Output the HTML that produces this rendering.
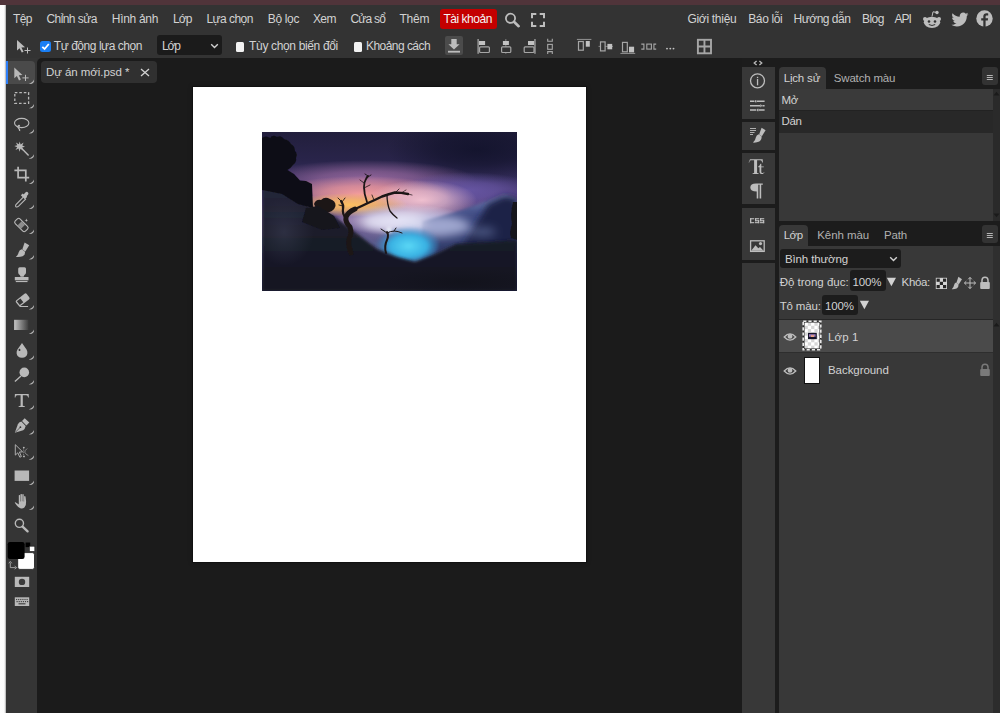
<!DOCTYPE html>
<html><head><meta charset="utf-8"><style>
html,body{margin:0;padding:0;}
body{width:1000px;height:713px;overflow:hidden;position:relative;background:#1b1b1b;font-family:"Liberation Sans",sans-serif;}
body>div,body>span,body>svg{position:absolute;}
span{white-space:nowrap;}
</style></head><body>
<div style="left:0px;top:0px;width:1000px;height:5px;background:rgb(80,52,58);"></div><div style="left:0px;top:5px;width:6px;height:708px;background:linear-gradient(to right,#fefefe 0,#fcfcfc 4.2px,#c8c8c8 5.4px,#9a9a9a 6px);"></div><div style="left:6px;top:5px;width:994px;height:53px;background:#333333;"></div><div style="left:6px;top:58px;width:31px;height:655px;background:#353535;"></div><div style="left:37px;top:57px;width:8px;height:8px;background:#343434;"></div><div style="left:37px;top:58px;width:705px;height:655px;background:#1b1b1b;border-radius:5px 0 0 0;"></div><span style="left:12.90px;top:12.84px;font-size:12px;line-height:12px;color:#d2d2d2;letter-spacing:-0.586px;">Tệp</span><span style="left:46.40px;top:12.84px;font-size:12px;line-height:12px;color:#d2d2d2;letter-spacing:-0.549px;">Chỉnh sửa</span><span style="left:111.80px;top:12.84px;font-size:12px;line-height:12px;color:#d2d2d2;letter-spacing:-0.298px;">Hình ảnh</span><span style="left:173.00px;top:12.84px;font-size:12px;line-height:12px;color:#d2d2d2;letter-spacing:-0.909px;">Lớp</span><span style="left:206.40px;top:12.84px;font-size:12px;line-height:12px;color:#d2d2d2;letter-spacing:-0.531px;">Lựa chọn</span><span style="left:267.80px;top:12.84px;font-size:12px;line-height:12px;color:#d2d2d2;letter-spacing:-0.349px;">Bộ lọc</span><span style="left:313.00px;top:12.84px;font-size:12px;line-height:12px;color:#d2d2d2;letter-spacing:-0.636px;">Xem</span><span style="left:350.40px;top:12.84px;font-size:12px;line-height:12px;color:#d2d2d2;letter-spacing:-0.755px;">Cửa sổ</span><span style="left:399.40px;top:12.84px;font-size:12px;line-height:12px;color:#d2d2d2;letter-spacing:-0.224px;">Thêm</span><div style="left:440px;top:9px;width:56.5px;height:19.5px;background:#c40000;border-radius:3px;"></div><span style="left:443.40px;top:12.84px;font-size:12px;line-height:12px;color:#f4f4f4;letter-spacing:-0.461px;">Tài khoản</span><svg style="left:504px;top:12px;" width="18" height="16" viewBox="0 0 18 16"><circle cx="6.5" cy="6.3" r="4.6" fill="none" stroke="#bdbdbd" stroke-width="1.8"/><line x1="10" y1="9.8" x2="14.6" y2="14.2" stroke="#bdbdbd" stroke-width="2.6" stroke-linecap="round"/></svg><svg style="left:530px;top:11.5px;" width="16" height="16" viewBox="0 0 16 16"><path d="M2 6.3V2H6.3M9.7 2H14V6.3M14 9.7V14H9.7M6.3 14H2V9.7" fill="none" stroke="#bdbdbd" stroke-width="2"/></svg><span style="left:687.40px;top:12.84px;font-size:12px;line-height:12px;color:#d2d2d2;letter-spacing:-0.288px;">Giới thiệu</span><span style="left:748.20px;top:12.84px;font-size:12px;line-height:12px;color:#d2d2d2;letter-spacing:-0.348px;">Báo lỗi</span><span style="left:793.60px;top:12.84px;font-size:12px;line-height:12px;color:#d2d2d2;letter-spacing:-0.496px;">Hướng dẫn</span><span style="left:861.90px;top:12.84px;font-size:12px;line-height:12px;color:#d2d2d2;letter-spacing:-0.505px;">Blog</span><span style="left:894.40px;top:12.84px;font-size:12px;line-height:12px;color:#d2d2d2;letter-spacing:-0.964px;">API</span><svg style="left:922px;top:10px;" width="20" height="19" viewBox="0 0 20 19"><ellipse cx="10" cy="12.3" rx="8.2" ry="5.6" fill="#bdbdbd"/><circle cx="3" cy="9" r="2" fill="#bdbdbd"/><circle cx="17" cy="9" r="2" fill="#bdbdbd"/><circle cx="15" cy="2.5" r="1.7" fill="#bdbdbd"/><path d="M10 6.5L11 1.8L15 2.5" fill="none" stroke="#bdbdbd" stroke-width="1"/><circle cx="7" cy="11.5" r="1.3" fill="#333333"/><circle cx="13" cy="11.5" r="1.3" fill="#333333"/><path d="M6.8 14.5Q10 16.5 13.2 14.5" fill="none" stroke="#333333" stroke-width="1"/></svg><svg style="left:951px;top:12px;" width="18" height="15" viewBox="0 0 18 15"><path d="M17.5 2.1c-.6.3-1.3.5-2 .6.7-.4 1.3-1.1 1.5-1.9-.7.4-1.4.7-2.2.9C14.1.9 13.2.5 12.2.5c-1.9 0-3.5 1.6-3.5 3.5 0 .3 0 .5.1.8C5.9 4.7 3.3 3.3 1.6 1.2c-.3.5-.5 1.1-.5 1.8 0 1.2.6 2.3 1.6 2.9-.6 0-1.1-.2-1.6-.4 0 1.7 1.2 3.1 2.8 3.4-.3.1-.6.1-.9.1-.2 0-.4 0-.7-.1.4 1.4 1.7 2.4 3.3 2.4-1.2.9-2.7 1.5-4.4 1.5H.5c1.6 1 3.4 1.6 5.4 1.6 6.4 0 9.9-5.3 9.9-9.9v-.5c.7-.5 1.3-1.1 1.7-1.9z" fill="#bdbdbd"/></svg><svg style="left:976px;top:10px;" width="17" height="17" viewBox="0 0 17 17"><circle cx="8.5" cy="8.5" r="8.2" fill="#bdbdbd"/><path d="M9.6 17V10.6H11.8L12.1 8.2H9.6V6.7C9.6 6 9.8 5.5 10.8 5.5H12.2V3.4C11.9 3.4 11.2 3.3 10.4 3.3 8.7 3.3 7.3 4.4 7.3 6.3V8.2H5.2V10.6H7.3V17Z" fill="#333333"/></svg><svg style="left:16px;top:39px;" width="16" height="15" viewBox="0 0 16 15"><path d="M1 1L1 11.5L3.6 9.2L5.8 13.6L7.6 12.7L5.4 8.4L9 8.2Z" fill="#bdbdbd"/><path d="M11.5 8.5V14.5M8.5 11.5H14.5" stroke="#bdbdbd" stroke-width="1"/></svg><div style="left:40.2px;top:41.1px;width:10.4px;height:10.8px;background:#1a7ff5;border-radius:2.5px;"></div><svg style="left:40px;top:41px;" width="11" height="11" viewBox="0 0 11 11"><path d="M2.3 5.8L4.6 8L8.8 3" fill="none" stroke="#fff" stroke-width="1.8"/></svg><span style="left:53.80px;top:39.84px;font-size:12px;line-height:12px;color:#d2d2d2;letter-spacing:-0.455px;">Tự động lựa chọn</span><div style="left:157px;top:35px;width:65px;height:20px;background:#1b1b1b;border-radius:3px;"></div><span style="left:161.90px;top:40.04px;font-size:12px;line-height:12px;color:#d2d2d2;letter-spacing:-1.109px;">Lớp</span><svg style="left:209.5px;top:42.5px;" width="9" height="6" viewBox="0 0 9 6"><path d="M1.2 1.2L4.5 4.4L7.8 1.2" fill="none" stroke="#d2d2d2" stroke-width="1.4"/></svg><div style="left:235.8px;top:42px;width:8.4px;height:9.6px;background:#f2f2f2;border-radius:1.5px;"></div><span style="left:249.10px;top:39.84px;font-size:12px;line-height:12px;color:#d2d2d2;letter-spacing:-0.350px;">Tùy chọn biến đổi</span><div style="left:354px;top:42px;width:8.4px;height:9.6px;background:#f2f2f2;border-radius:1.5px;"></div><span style="left:366.00px;top:39.84px;font-size:12px;line-height:12px;color:#d2d2d2;letter-spacing:-0.543px;">Khoảng cách</span><div style="left:445px;top:35.6px;width:18px;height:19.2px;background:#4b4b4b;border-radius:2px;"></div><svg style="left:445px;top:35.6px;" width="18" height="19" viewBox="0 0 18 19"><path d="M6.3 3H11.7V8.3H14.6L9 13.6L3.4 8.3H6.3Z" fill="#bdbdbd"/><rect x="3" y="14.8" width="12" height="1.8" fill="#bdbdbd"/></svg><svg style="left:0;top:0" width="1000" height="60" viewBox="0 0 1000 60"><rect x="477.3" y="39" width="1.7" height="14.8" fill="#8a8a8a"/><rect x="479" y="41" width="6.1" height="4" fill="#c2c2c2"/><rect x="479.6" y="46.8" width="9.8" height="5.7" rx="1" fill="none" stroke="#a6a6a6" stroke-width="1.2"/><rect x="505.4" y="39" width="0.9" height="14.8" fill="#8a8a8a"/><rect x="502.9" y="41" width="6" height="4" fill="#c2c2c2"/><rect x="501.6" y="46.8" width="9.2" height="5.7" rx="1" fill="#333333" stroke="#a6a6a6" stroke-width="1.2"/><rect x="534.1" y="39" width="1.7" height="14.8" fill="#8a8a8a"/><rect x="528" y="41" width="6.1" height="4" fill="#c2c2c2"/><rect x="524.2" y="46.8" width="9.8" height="5.7" rx="1" fill="none" stroke="#a6a6a6" stroke-width="1.2"/><path d="M547.7 38.8V41.3H552.3V38.8M547.7 54V51.6H552.3V54" fill="none" stroke="#a6a6a6" stroke-width="1.1"/><rect x="547.7" y="44.4" width="4.6" height="4.9" fill="none" stroke="#a6a6a6" stroke-width="1.1"/><rect x="576.9" y="38.9" width="14.5" height="1.1" fill="#8a8a8a"/><rect x="578.5" y="41.5" width="4.8" height="8.7" fill="none" stroke="#a6a6a6" stroke-width="1.2"/><rect x="585.8" y="41" width="4" height="5.7" fill="#c2c2c2"/><rect x="598.5" y="45.9" width="14.5" height="0.9" fill="#8a8a8a"/><rect x="600.5" y="41.9" width="4.6" height="9" fill="#333333" stroke="#a6a6a6" stroke-width="1.2"/><rect x="607.4" y="43.9" width="4.8" height="5.4" fill="#c2c2c2"/><rect x="620.4" y="52.9" width="14.8" height="1.1" fill="#8a8a8a"/><rect x="622.5" y="42.4" width="4.8" height="9.4" fill="none" stroke="#a6a6a6" stroke-width="1.2"/><rect x="629" y="46.7" width="5.1" height="5.7" fill="#c2c2c2"/><path d="M641.3 44.1H643.9V49.1H641.3M656.2 44.1H653.9V49.1H656.2" fill="none" stroke="#a6a6a6" stroke-width="1.1"/><rect x="646.8" y="44.1" width="4.6" height="5" fill="none" stroke="#a6a6a6" stroke-width="1.1"/><circle cx="667" cy="48.6" r="0.95" fill="#c2c2c2"/><circle cx="670.3" cy="48.6" r="0.95" fill="#c2c2c2"/><circle cx="673.5" cy="48.6" r="0.95" fill="#c2c2c2"/><rect x="697.9" y="39.8" width="13.1" height="13.5" fill="none" stroke="#a6a6a6" stroke-width="1.9"/><path d="M704.45 39.8V53.3M697.9 46.55H711" stroke="#a6a6a6" stroke-width="1.9"/></svg><div style="left:40.8px;top:61.3px;width:116px;height:21.6px;background:#303030;border-radius:4px;"></div><span style="left:46.00px;top:67.27px;font-size:11.5px;line-height:11.5px;color:#d2d2d2;letter-spacing:-0.060px;">Dự án mới.psd *</span><svg style="left:140px;top:68px;" width="10" height="9" viewBox="0 0 10 9"><path d="M1 1L9 8M9 1L1 8" stroke="#d2d2d2" stroke-width="1.3"/></svg><div style="left:192.9px;top:86.9px;width:393.4px;height:474.8px;background:#ffffff;box-shadow:0 0 0 1px #111111,0 0 4px 1px rgba(0,0,0,0.25);"></div><svg style="left:262px;top:132px" width="255" height="159" viewBox="0 0 255 159" preserveAspectRatio="none">
<defs>
<filter id="b4" x="-50%" y="-50%" width="200%" height="200%"><feGaussianBlur stdDeviation="5"/></filter>
<filter id="b3" x="-50%" y="-50%" width="200%" height="200%"><feGaussianBlur stdDeviation="3"/></filter>
<filter id="b2" x="-50%" y="-50%" width="200%" height="200%"><feGaussianBlur stdDeviation="1.8"/></filter>
<filter id="b1" x="-50%" y="-50%" width="200%" height="200%"><feGaussianBlur stdDeviation="0.7"/></filter>
<filter id="b05" x="-50%" y="-50%" width="200%" height="200%"><feGaussianBlur stdDeviation="0.35"/></filter>
<clipPath id="cl"><rect width="255" height="159"/></clipPath>
<linearGradient id="sky" x1="0" y1="0" x2="0" y2="1">
<stop offset="0" stop-color="#221f3c"/><stop offset="0.18" stop-color="#29244a"/><stop offset="0.3" stop-color="#362e5e"/><stop offset="0.4" stop-color="#4e3e7c"/><stop offset="0.55" stop-color="#7a6096"/><stop offset="0.7" stop-color="#5a5a8a"/><stop offset="1" stop-color="#25283e"/>
</linearGradient>
<linearGradient id="gnd" x1="0" y1="0" x2="0" y2="1">
<stop offset="0" stop-color="#25273a"/><stop offset="0.5" stop-color="#191a27"/><stop offset="1" stop-color="#161722"/>
</linearGradient>
<linearGradient id="mtn" x1="0" y1="0" x2="0" y2="1">
<stop offset="0" stop-color="#7480b4"/><stop offset="0.2" stop-color="#404c84"/><stop offset="1" stop-color="#1e2448"/>
</linearGradient>
<radialGradient id="lk" cx="0.55" cy="0.55" r="0.5"><stop offset="0" stop-color="#5ad8f6"/><stop offset="0.55" stop-color="#38b0e2"/><stop offset="1" stop-color="#3a80c4" stop-opacity="0"/></radialGradient>
<radialGradient id="g1"><stop offset="0" stop-color="#11122a" stop-opacity="0.85"/><stop offset="0.45" stop-color="#11122a" stop-opacity="0.595"/><stop offset="1" stop-color="#11122a" stop-opacity="0"/></radialGradient><radialGradient id="g2"><stop offset="0" stop-color="#a470a6" stop-opacity="0.85"/><stop offset="0.45" stop-color="#a470a6" stop-opacity="0.595"/><stop offset="1" stop-color="#a470a6" stop-opacity="0"/></radialGradient><radialGradient id="g3"><stop offset="0" stop-color="#6c5aaa" stop-opacity="0.85"/><stop offset="0.45" stop-color="#6c5aaa" stop-opacity="0.595"/><stop offset="1" stop-color="#6c5aaa" stop-opacity="0"/></radialGradient><radialGradient id="g4"><stop offset="0" stop-color="#f49c9c" stop-opacity="1.0"/><stop offset="0.45" stop-color="#f49c9c" stop-opacity="0.700"/><stop offset="1" stop-color="#f49c9c" stop-opacity="0"/></radialGradient><radialGradient id="g5"><stop offset="0" stop-color="#f4c4d2" stop-opacity="0.95"/><stop offset="0.45" stop-color="#f4c4d2" stop-opacity="0.665"/><stop offset="1" stop-color="#f4c4d2" stop-opacity="0"/></radialGradient><radialGradient id="g6"><stop offset="0" stop-color="#ffc060" stop-opacity="1.0"/><stop offset="0.45" stop-color="#ffc060" stop-opacity="0.700"/><stop offset="1" stop-color="#ffc060" stop-opacity="0"/></radialGradient><radialGradient id="g7"><stop offset="0" stop-color="#e6e0f4" stop-opacity="0.95"/><stop offset="0.45" stop-color="#e6e0f4" stop-opacity="0.665"/><stop offset="1" stop-color="#e6e0f4" stop-opacity="0"/></radialGradient><radialGradient id="hill"><stop offset="0" stop-color="#34374c" stop-opacity="0.7"/><stop offset="1" stop-color="#34374c" stop-opacity="0"/></radialGradient><radialGradient id="vig"><stop offset="0" stop-color="#101118" stop-opacity="0.6"/><stop offset="1" stop-color="#101118" stop-opacity="0"/></radialGradient>
</defs>
<g clip-path="url(#cl)">
<rect width="255" height="159" fill="url(#sky)"/>
<ellipse cx="215" cy="18" rx="90" ry="34" fill="url(#g1)"/><ellipse cx="105" cy="48" rx="110" ry="20" fill="url(#g2)"/><ellipse cx="205" cy="58" rx="70" ry="18" fill="url(#g3)"/><ellipse cx="100" cy="62" rx="90" ry="18" fill="url(#g4)"/><ellipse cx="160" cy="68" rx="55" ry="20" fill="url(#g5)"/><ellipse cx="88" cy="73" rx="58" ry="12" fill="url(#g6)"/><ellipse cx="140" cy="88" rx="65" ry="16" fill="url(#g7)"/>
<path d="M160 90L200 78L242 63L250 65L255 68V159H160Z" fill="url(#mtn)" filter="url(#b2)"/>
<path d="M200 116L214 92L226 72L242 64L255 66V159H200Z" fill="#1e2446" filter="url(#b3)"/>
<g filter="url(#b4)">
<ellipse cx="172" cy="94" rx="36" ry="11" fill="#b8bee4" opacity="0.8"/><ellipse cx="220" cy="100" rx="14" ry="5" fill="#6a78a8" opacity="0.6"/>
<ellipse cx="132" cy="90" rx="32" ry="8" fill="#e4e4f6" opacity="0.85"/>
</g>
<ellipse cx="143" cy="112" rx="34" ry="20" fill="url(#lk)" filter="url(#b2)"/>
<circle cx="127" cy="98" r="3" fill="#f4f8ff" opacity="0.8" filter="url(#b2)"/>
<path d="M0 56L30 60L51 76L72 84L102 107L115 117L135 125L153 130L173 122.5L194 112L230 110L255 108V159H0Z" fill="url(#gnd)" filter="url(#b2)"/>
<ellipse cx="22" cy="100" rx="30" ry="34" fill="url(#hill)"/>
<ellipse cx="200" cy="150" rx="80" ry="14" fill="url(#vig)"/>
<g filter="url(#b1)">
<path d="M0 6Q4 3 8 6Q11 2 15 5Q19 3 22 7Q27 8 29 12Q33 14 33 19Q36 22 34 26Q35 30 31 33Q29 36 25.5 38L32 42L38 48.5L44 49L50 52L51 76L36 72L20 62L0 58Z" fill="#0e0e16"/>
<path d="M52 72Q54 67 59 68Q63 64 68 67Q74 69 73.5 74Q72 80 63 81Q55 81 52 72Z" fill="#1c1418"/>
<path d="M44 76L56 74L72 84L78 96L60 98L40 90Z" fill="#14141e"/>
</g>
<g filter="url(#b05)" fill="none" stroke="#1c1517" stroke-linecap="round" stroke-linejoin="round">
<path d="M89 121Q86 114 87 107Q90 101 88 95Q83 90 84 85Q86 80 93 77" stroke-width="5"/>
<path d="M84 86Q80 82 81 77Q82 73 79 69" stroke-width="2.2"/>
<path d="M93 77Q100 74 106 71Q113 68 120 64.5Q127 62 133 60.5Q139 60.5 146 62" stroke-width="2.4"/>
<path d="M105 70Q102 62 102 55Q102 50 104 47Q105 45 106 44" stroke-width="1.8"/>
<path d="M106 44L103 42M106 45L109 43" stroke-width="0.9"/>
<path d="M125 63Q125 72 128 79Q131 83 135 86" stroke-width="1.3"/>
<path d="M79 69L76 66M80 70L83 66M81 74L77 73" stroke-width="0.9"/>
<path d="M102 56L108 53M102 51L98 48M112 68L110 63M133 61L137 57" stroke-width="0.8"/>
<path d="M146 62L150 63M140 60.5L144 58" stroke-width="0.7"/>
<path d="M124 121Q122 114 125 108Q127 103 125 100" stroke-width="2"/>
<path d="M125 101Q122 99 119 97M125 101Q132 97 140 101M132 99L134 96" stroke-width="1"/>
</g>
<path d="M251 70Q248 82 250 92Q247 100 249 106L255 108V70Z" fill="#14151e" filter="url(#b05)"/>
</g>
</svg><div style="left:6px;top:61px;width:29px;height:23px;background:#4a4a4a;border-radius:0 4px 4px 0;"></div><div style="left:6px;top:61px;width:2.3px;height:23px;background:#2d7ff9;"></div><svg style="left:0;top:0" width="40" height="713" viewBox="0 0 40 713"><path d="M14.3 67.5V78.3L16.9 76L19 80.5L20.9 79.6L18.8 75.2L22.4 75Z" fill="#b9b9b9"/><path d="M25.5 74.8V81M22.4 77.9H28.6" stroke="#b9b9b9" stroke-width="1"/><path d="M34 79.6Q34.5 84.5 28.8 84Q33 82.4 34 79.6Z" fill="#b9b9b9"/><rect x="14.8" y="92.6" width="13.8" height="10.7" fill="none" stroke="#b9b9b9" stroke-width="1.3" stroke-dasharray="2.6 1.9"/><path d="M34 103.89999999999999Q34.5 108.8 28.8 108.3Q33 106.7 34 103.89999999999999Z" fill="#b9b9b9"/><ellipse cx="21.7" cy="123" rx="7.2" ry="4.6" fill="none" stroke="#b9b9b9" stroke-width="1.1"/><path d="M18.8 125.5Q17 126.5 18.5 128Q20 129.5 19.6 131" fill="none" stroke="#b9b9b9" stroke-width="1.3"/><circle cx="19" cy="125.8" r="1.1" fill="#b9b9b9"/><path d="M34 129.1Q34.5 134.0 28.8 133.5Q33 131.9 34 129.1Z" fill="#b9b9b9"/><path d="M19.7 141.4L20.6 144.4L23.6 142.6L22.3 145.6L25 146.8L22.2 147.6L23.4 150.8L20.5 148.8L19.5 151.7L18.6 148.6L15.5 150L17.2 147.2L14.3 146L17.3 145.2L15.9 142.4L18.9 144.2Z" fill="#b9b9b9"/><line x1="21.8" y1="148.5" x2="28.6" y2="155.6" stroke="#b9b9b9" stroke-width="1.4"/><path d="M34 154.2Q34.5 159.1 28.8 158.6Q33 157.0 34 154.2Z" fill="#b9b9b9"/><path d="M18.1 166.8V177.6H29.2M14.4 170.4H25.8V181.4" fill="none" stroke="#b9b9b9" stroke-width="1.7"/><path d="M34 179.6Q34.5 184.5 28.8 184Q33 182.4 34 179.6Z" fill="#b9b9b9"/><path d="M23.3 197.2L16 204.5Q15 206.3 16.2 206.9Q17.3 207.3 18.6 206.2L25.9 198.9" fill="none" stroke="#b9b9b9" stroke-width="1.1"/><path d="M21.7 196.3L24.3 193.7L25.4 192.5Q26.8 191.2 28 192.4Q29.1 193.6 27.8 195L26.7 196.1L27.1 196.7L25.2 198.6L21.8 195.3Z" fill="#b9b9b9"/><rect x="21" y="195.1" width="5.5" height="2.6" transform="rotate(45 23.75 196.4)" fill="#b9b9b9"/><path d="M34 204.6Q34.5 209.5 28.8 209Q33 207.4 34 204.6Z" fill="#b9b9b9"/><g transform="rotate(-45 21.4 225)"><rect x="18.1" y="217.8" width="6.6" height="14.4" rx="1.8" fill="none" stroke="#b9b9b9" stroke-width="1.1"/><rect x="18.6" y="222.6" width="5.6" height="4.8" fill="#8d8d8d"/></g><path d="M26.3 218.6L26.9 219.9L28.2 220.3L26.9 220.8L26.3 222.1L25.8 220.8L24.5 220.3L25.8 219.9Z" fill="#b9b9b9"/><path d="M34 229.6Q34.5 234.5 28.8 234Q33 232.4 34 229.6Z" fill="#b9b9b9"/><path d="M24.6 242.5L29.2 245.3L25.3 251.5L22.3 249.6Z" fill="#b9b9b9"/><path d="M21.8 249.3L25 251.7Q25.4 254.8 22.6 256.3Q19.9 257.4 15.8 257Q18.4 254.7 18.7 252.3Q19.4 249.7 21.8 249.3Z" fill="#b9b9b9"/><path d="M34 255.1Q34.5 260.0 28.8 259.5Q33 257.9 34 255.1Z" fill="#b9b9b9"/><path d="M18.2 268.7Q18.2 267.2 19.7 267.2H24.5Q26 267.2 26 268.7V272.6Q26 274.1 24.4 275.1L23.6 276.8H20.6L19.8 275.1Q18.2 274.1 18.2 272.6Z" fill="#b9b9b9"/><rect x="14.8" y="277" width="13.7" height="3.3" fill="#b9b9b9"/><rect x="15.8" y="281" width="11.7" height="1.1" fill="#b9b9b9"/><g transform="rotate(-38 22.5 299.8)"><rect x="15.8" y="296.3" width="13.6" height="7.2" rx="1.6" fill="#b9b9b9"/><rect x="17.1" y="297.5" width="4.5" height="4.8" fill="#353535"/></g><rect x="19.5" y="306" width="8.6" height="1" fill="#b9b9b9"/><path d="M34 305.1Q34.5 310.0 28.8 309.5Q33 307.9 34 305.1Z" fill="#b9b9b9"/><defs><linearGradient id="gr" x1="0" x2="1"><stop offset="0" stop-color="#c4c4c4"/><stop offset="1" stop-color="#3c3c3c"/></linearGradient></defs><rect x="14.1" y="319.8" width="14.4" height="10.2" fill="url(#gr)"/><path d="M34 329.6Q34.5 334.5 28.8 334Q33 332.4 34 329.6Z" fill="#b9b9b9"/><path d="M22 343.1Q24.5 346.8 26.4 349.3Q27.6 351.3 27.4 353.2Q26.9 357.5 22 357.8Q17.1 357.5 16.6 353.2Q16.4 351.3 17.6 349.3Q19.5 346.8 22 343.1Z" fill="#b9b9b9"/><ellipse cx="19.5" cy="349.9" rx="0.9" ry="1.2" fill="#353535"/><path d="M34 355.20000000000005Q34.5 360.1 28.8 359.6Q33 358.0 34 355.20000000000005Z" fill="#b9b9b9"/><circle cx="24.3" cy="372.4" r="4.8" fill="#b9b9b9"/><line x1="21" y1="376" x2="14.9" y2="381.6" stroke="#b9b9b9" stroke-width="1.3"/><path d="M34 380.1Q34.5 385.0 28.8 384.5Q33 382.9 34 380.1Z" fill="#b9b9b9"/><path d="M14.9 394H28.7L28.8 397.6H28.1Q27.8 395.3 26.2 395.3H22.8V405.8L24.8 406.3V407.1H18.6V406.3L20.6 405.8V395.3H17.3Q15.6 395.3 15.4 397.6H14.7Z" fill="#b9b9b9"/><path d="M34 405.1Q34.5 410.0 28.8 409.5Q33 407.9 34 405.1Z" fill="#b9b9b9"/><path d="M24.7 418.2L29.3 422.6L26.4 425.4L22 421Z" fill="#b9b9b9"/><path d="M21.3 421.6L25.7 426Q24.9 429.4 23.2 430.2L14.8 432.8L17.9 424.2Q18.7 422.4 21.3 421.6Z" fill="#b9b9b9"/><path d="M15.3 432.3L20.1 427.5" stroke="#353535" stroke-width="0.7"/><circle cx="20.4" cy="427.2" r="0.9" fill="#353535"/><path d="M34 430.1Q34.5 435.0 28.8 434.5Q33 432.9 34 430.1Z" fill="#b9b9b9"/><path d="M15.3 444.7V455.1L17.8 452.8L19.8 457.2L21.4 456.5L19.4 452.1L22.6 451.8Z" fill="none" stroke="#b9b9b9" stroke-width="0.9"/><path d="M23.6 447.5V456.8" stroke="#b9b9b9" stroke-width="0.8" stroke-dasharray="0.9 1.2"/><circle cx="23.8" cy="447.6" r="0.9" fill="#b9b9b9"/><circle cx="24" cy="456.4" r="0.9" fill="#b9b9b9"/><path d="M27.2 448.5Q24.6 450.5 24.8 452.2Q25.2 454 28.4 455.6" fill="none" stroke="#b9b9b9" stroke-width="0.6"/><path d="M34 455.20000000000005Q34.5 460.1 28.8 459.6Q33 458.0 34 455.20000000000005Z" fill="#b9b9b9"/><rect x="14.6" y="470.5" width="14.5" height="10.4" fill="#b9b9b9"/><path d="M34 480.6Q34.5 485.5 28.8 485Q33 483.4 34 480.6Z" fill="#b9b9b9"/><path d="M18.8 495.3Q19.5 494.7 20.1 495.3V501.5L20.5 501.5V494.3Q21.2 493.6 21.9 494.3V501.2L22.3 501.2V494.4Q23 493.8 23.7 494.4V501.5L24.1 501.5V496.4Q24.8 495.7 25.5 496.4L26.1 501.5Q26.4 505.5 24.4 507.5Q22.5 509 20.3 508.2Q18.2 507.4 16.4 504.9L14.8 502.7Q14.7 502.1 15.4 502.2Q16.8 503 18.8 504.6Z" fill="#b9b9b9"/><path d="M34 505.6Q34.5 510.5 28.8 510Q33 508.4 34 505.6Z" fill="#b9b9b9"/><circle cx="19.4" cy="523.3" r="4.1" fill="none" stroke="#b9b9b9" stroke-width="1.4"/><line x1="22.6" y1="526.6" x2="27.6" y2="531.4" stroke="#b9b9b9" stroke-width="2.3" stroke-linecap="round"/><rect x="25.6" y="542.5" width="4.6" height="4.6" fill="#000"/><rect x="29.4" y="546.2" width="5.4" height="5.2" fill="#fff" stroke="#1a1a1a" stroke-width="0.6"/><rect x="17.7" y="552.6" width="16.8" height="16.8" rx="2.2" fill="#fff" stroke="#1a1a1a" stroke-width="0.8"/><rect x="7.7" y="542" width="16.9" height="16.9" rx="2.2" fill="#000"/><path d="M10.3 562.8V567.6H15.6M8.8 563.3L10.3 561.4L11.8 563.3M14.7 566.1L16.6 567.6L14.7 569.1" fill="none" stroke="#b9b9b9" stroke-width="0.8"/><rect x="14.8" y="576.8" width="14.4" height="10.2" fill="#b9b9b9"/><circle cx="22" cy="581.9" r="3.2" fill="#3c3c3c"/><rect x="14.8" y="597.3" width="14.4" height="8.7" fill="#b9b9b9"/><rect x="16.0" y="598.9" width="1.2" height="1.2" fill="#444"/><rect x="16.5" y="601" width="1.2" height="1.2" fill="#444"/><rect x="18.1" y="598.9" width="1.2" height="1.2" fill="#444"/><rect x="18.6" y="601" width="1.2" height="1.2" fill="#444"/><rect x="20.2" y="598.9" width="1.2" height="1.2" fill="#444"/><rect x="20.7" y="601" width="1.2" height="1.2" fill="#444"/><rect x="22.3" y="598.9" width="1.2" height="1.2" fill="#444"/><rect x="22.8" y="601" width="1.2" height="1.2" fill="#444"/><rect x="24.4" y="598.9" width="1.2" height="1.2" fill="#444"/><rect x="24.9" y="601" width="1.2" height="1.2" fill="#444"/><rect x="26.5" y="598.9" width="1.2" height="1.2" fill="#444"/><rect x="27.0" y="601" width="1.2" height="1.2" fill="#444"/><rect x="18.5" y="603.2" width="7" height="1.2" fill="#444"/></svg><div style="left:742px;top:58px;width:258px;height:655px;background:#1c1c1c;"></div><div style="left:742px;top:67px;width:33px;height:52.3px;background:#383838;"></div><div style="left:742px;top:122.3px;width:33px;height:27.39999999999999px;background:#383838;"></div><div style="left:742px;top:152.9px;width:33px;height:51.5px;background:#383838;"></div><div style="left:742px;top:207.6px;width:33px;height:52.099999999999994px;background:#383838;"></div><div style="left:742px;top:262.9px;width:33px;height:450.1px;background:#383838;"></div><svg style="left:753px;top:60px;" width="11" height="6" viewBox="0 0 11 6"><path d="M3.6 0.9L1.2 3L3.6 5.1M6.4 0.9L8.8 3L6.4 5.1" fill="none" stroke="#b8b8b8" stroke-width="1.3"/></svg><svg style="left:884px;top:60px;" width="11" height="6" viewBox="0 0 11 6"><path d="M1.2 0.9L3.6 3L1.2 5.1M8.8 0.9L6.4 3L8.8 5.1" fill="none" stroke="#b8b8b8" stroke-width="1.3"/></svg><svg style="left:748px;top:72px;" width="19" height="18" viewBox="0 0 19 18"><circle cx="9.5" cy="8.8" r="7" fill="none" stroke="#bdbdbd" stroke-width="1.3"/><rect x="8.9" y="4.8" width="1.3" height="1.3" fill="#bdbdbd"/><rect x="8.9" y="7" width="1.3" height="6.3" fill="#bdbdbd"/></svg><svg style="left:749px;top:100px;" width="17" height="12" viewBox="0 0 17 12"><path d="M1 1.2H5.4M7.6 1.2H15.6M1 5.7H11.2M13.4 5.7H15.6M1 10H7.2M9.4 10H15.6" stroke="#bdbdbd" stroke-width="1.6"/><path d="M7.2 -0.6V3L5.6 1.2Z" fill="#bdbdbd"/><path d="M11.4 3.9V7.5L13.2 5.7Z" fill="#bdbdbd"/><path d="M9.2 8.2V11.8L7.5 10Z" fill="#bdbdbd"/></svg><svg style="left:749px;top:127px;" width="18" height="18" viewBox="0 0 18 18"><path d="M1 1.5H7M1 3.5H7M1 5.5H5.5M1 7.5H4" stroke="#bdbdbd" stroke-width="0.9"/><path d="M12.6 0.8L16.6 3.3L12.9 9.2L10.1 7.5Z" fill="#bdbdbd"/><path d="M9.6 7.2L12.6 9.3Q12.9 12.8 10.3 14.5Q7.8 15.8 4 15.6Q6.6 13.2 6.8 10.6Q7.4 7.8 9.6 7.2Z" fill="#bdbdbd"/></svg><svg style="left:740px;top:150px;" width="30" height="55" viewBox="0 0 30 55"><path d="M750 159.2H762.7L762.9 162.6H762.2Q761.8 160.3 760.3 160.3H757.1V172.9L758.6 173.3V173.9H752.6V173.3L754.1 172.9V160.3H751Q749.5 160.3 749.2 162.6H748.6Z" fill="#bdbdbd" transform="translate(-740 -150)"/>
<path d="M760.4 163.8H761.3V166.4H763.8V167.3H761.3V172Q761.3 173.1 762.5 173Q763.6 172.8 764.2 172.2L764.5 172.6Q763.5 174 761.7 174.1Q759.5 174.2 759.5 172V167.3H758.2V166.6Q759.8 166 760.4 163.8Z" fill="#bdbdbd" transform="translate(-740 -150)"/>
<path d="M756 183.6H762.8V184.8H761.2V198.5H759.6V184.8H758.3V198.5H756.7V191.5Q750.3 191.5 750.3 187.5Q750.3 183.6 756 183.6Z" fill="#bdbdbd" transform="translate(-740 -150)"/></svg><svg style="left:749px;top:217px;" width="17" height="8" viewBox="0 0 17 8"><rect x="1" y="1.2" width="4.2" height="1.1" fill="#bdbdbd"/><rect x="1" y="1.2" width="1.3" height="5" fill="#bdbdbd"/><rect x="1" y="5.1" width="4.2" height="1.1" fill="#bdbdbd"/><rect x="6" y="1.2" width="4.2" height="1.1" fill="#bdbdbd"/><rect x="6" y="1.2" width="1.2" height="3" fill="#bdbdbd"/><rect x="6" y="3.2" width="4.2" height="1.1" fill="#bdbdbd"/><rect x="9" y="3.2" width="1.2" height="3" fill="#bdbdbd"/><rect x="6" y="5.1" width="4.2" height="1.1" fill="#bdbdbd"/><rect x="11" y="1.2" width="4.2" height="1.1" fill="#bdbdbd"/><rect x="11" y="1.2" width="1.2" height="3" fill="#bdbdbd"/><rect x="11" y="3.2" width="4.2" height="1.1" fill="#bdbdbd"/><rect x="14" y="3.2" width="1.2" height="3" fill="#bdbdbd"/><rect x="11" y="5.1" width="4.2" height="1.1" fill="#bdbdbd"/></svg><svg style="left:749px;top:239px;" width="17" height="14" viewBox="0 0 17 14"><rect x="1.6" y="1.8" width="13.6" height="10.6" fill="none" stroke="#bdbdbd" stroke-width="1.3"/><path d="M2.2 11.8L6.5 6.3L9.3 9.2L11 8L14.6 11.8Z" fill="#bdbdbd"/><circle cx="11.5" cy="4.6" r="1.6" fill="#bdbdbd"/></svg><div style="left:779px;top:67px;width:214px;height:154px;background:#383838;"></div><div style="left:779px;top:58px;width:221px;height:30.7px;background:#1c1c1c;"></div><div style="left:779px;top:67px;width:46.5px;height:21.7px;background:#383838;border-radius:4px 4px 0 0;"></div><span style="left:783.70px;top:72.87px;font-size:11.5px;line-height:11.5px;color:#d2d2d2;letter-spacing:-0.172px;">Lịch sử</span><span style="left:833.80px;top:72.87px;font-size:11.5px;line-height:11.5px;color:#b0b0b0;letter-spacing:-0.183px;">Swatch màu</span><div style="left:982px;top:67.1px;width:15.6px;height:18.4px;background:#333333;border-radius:3px;"></div><svg style="left:982px;top:67px;" width="16" height="19" viewBox="0 0 16 19"><path d="M4.8 8.5H10.8M4.8 10.5H10.8M4.8 12.5H10.8" stroke="#c4c4c4" stroke-width="0.9"/></svg><div style="left:779px;top:88.7px;width:214px;height:21.3px;background:#3a3a3a;"></div><div style="left:779px;top:110px;width:214px;height:1.2px;background:#222222;"></div><div style="left:779px;top:111.2px;width:214px;height:21.8px;background:#282828;"></div><div style="left:779px;top:133px;width:214px;height:88px;background:#383838;"></div><div style="left:993px;top:88.7px;width:7px;height:132.3px;background:#2a2a2a;"></div><svg style="left:993px;top:91px;" width="7" height="5" viewBox="0 0 7 5"><path d="M0.5 4.5L3.5 0.8L6.5 4.5Z" fill="#1a1a1a"/></svg><svg style="left:993px;top:213px;" width="7" height="5" viewBox="0 0 7 5"><path d="M0.5 0.5L3.5 4.2L6.5 0.5Z" fill="#1a1a1a"/></svg><span style="left:781.40px;top:95.37px;font-size:11.5px;line-height:11.5px;color:#d2d2d2;letter-spacing:-0.125px;">Mở</span><span style="left:781.40px;top:116.47px;font-size:11.5px;line-height:11.5px;color:#d2d2d2;letter-spacing:-0.297px;">Dán</span><div style="left:779px;top:221px;width:221px;height:25px;background:#1c1c1c;"></div><div style="left:779px;top:224.5px;width:28.8px;height:21.2px;background:#383838;border-radius:4px 4px 0 0;"></div><span style="left:783.70px;top:229.77px;font-size:11.5px;line-height:11.5px;color:#d2d2d2;letter-spacing:-0.464px;">Lớp</span><span style="left:817.20px;top:229.77px;font-size:11.5px;line-height:11.5px;color:#b0b0b0;letter-spacing:-0.056px;">Kênh màu</span><span style="left:883.90px;top:229.77px;font-size:11.5px;line-height:11.5px;color:#b0b0b0;letter-spacing:-0.114px;">Path</span><div style="left:982px;top:224.5px;width:15.7px;height:18.4px;background:#333333;border-radius:3px;"></div><svg style="left:982px;top:224.5px;" width="16" height="19" viewBox="0 0 16 19"><path d="M4.8 8.5H10.8M4.8 10.5H10.8M4.8 12.5H10.8" stroke="#c4c4c4" stroke-width="0.9"/></svg><div style="left:779px;top:245.7px;width:214px;height:467.3px;background:#383838;"></div><div style="left:993px;top:245.7px;width:7px;height:467.3px;background:#2f2f2f;"></div><div style="left:993px;top:319.7px;width:7px;height:393.3px;background:#2c2c2c;"></div><div style="left:780.3px;top:248.6px;width:120.8px;height:19.6px;background:#1c1c1c;border-radius:3px;"></div><span style="left:785.00px;top:254.37px;font-size:11.5px;line-height:11.5px;color:#d2d2d2;letter-spacing:-0.144px;">Bình thường</span><svg style="left:888.5px;top:255.5px;" width="9" height="6" viewBox="0 0 9 6"><path d="M1.2 1.2L4.5 4.4L7.8 1.2" fill="none" stroke="#d2d2d2" stroke-width="1.4"/></svg><span style="left:779.70px;top:277.47px;font-size:11.5px;line-height:11.5px;color:#d2d2d2;letter-spacing:-0.007px;">Độ trong đục:</span><div style="left:850px;top:270px;width:35.5px;height:20.8px;background:#1c1c1c;border-radius:3px;"></div><span style="left:852.40px;top:277.47px;font-size:11.5px;line-height:11.5px;color:#d2d2d2;letter-spacing:-0.130px;">100%</span><svg style="left:886.3px;top:276.6px;" width="11" height="10" viewBox="0 0 11 10"><path d="M0.8 0.8H10L5.4 9.2Z" fill="#d2d2d2"/></svg><span style="left:901.60px;top:277.47px;font-size:11.5px;line-height:11.5px;color:#d2d2d2;letter-spacing:-0.358px;">Khóa:</span><svg style="left:935px;top:276.5px;" width="13" height="13" viewBox="0 0 13 13"><rect x="0.8" y="0.8" width="11.2" height="11.2" fill="#d4d4d4"/><rect x="1.6" y="1.6" width="3.2" height="3.2" fill="#262626"/><rect x="8.0" y="1.6" width="3.2" height="3.2" fill="#262626"/><rect x="4.8" y="4.8" width="3.2" height="3.2" fill="#262626"/><rect x="1.6" y="8.0" width="3.2" height="3.2" fill="#262626"/><rect x="8.0" y="8.0" width="3.2" height="3.2" fill="#262626"/></svg><svg style="left:951px;top:276px;" width="12" height="14" viewBox="0 0 12 14"><path d="M7.4 0.8L11 3.2L7.8 8.2L5.4 6.8Z" fill="#bdbdbd"/><path d="M5 6.5L7.6 8.3Q7.8 11 5.6 12.4Q3.6 13.4 0.8 13.2Q2.8 11.3 3 9.2Q3.4 7 5 6.5Z" fill="#bdbdbd"/></svg><svg style="left:964px;top:277px;" width="12" height="12" viewBox="0 0 12 12"><path d="M6 0.5V11.5M0.5 6H11.5" stroke="#bdbdbd" stroke-width="1"/><path d="M4.2 2.3L6 0.4L7.8 2.3M4.2 9.7L6 11.6L7.8 9.7M2.3 4.2L0.4 6L2.3 7.8M9.7 4.2L11.6 6L9.7 7.8" fill="none" stroke="#bdbdbd" stroke-width="1"/></svg><svg style="left:979px;top:276px;" width="12" height="14" viewBox="0 0 12 14"><path d="M3 6V4.3Q3 1.2 6 1.2Q9 1.2 9 4.3V6" fill="none" stroke="#bdbdbd" stroke-width="1.5"/><rect x="1.2" y="6" width="9.6" height="7" rx="1" fill="#bdbdbd"/></svg><span style="left:779.70px;top:301.07px;font-size:11.5px;line-height:11.5px;color:#d2d2d2;letter-spacing:-0.143px;">Tô màu:</span><div style="left:822.4px;top:294.9px;width:35.5px;height:20.2px;background:#1c1c1c;border-radius:3px;"></div><span style="left:824.90px;top:301.07px;font-size:11.5px;line-height:11.5px;color:#d2d2d2;letter-spacing:-0.130px;">100%</span><svg style="left:858.8px;top:300.4px;" width="11" height="10" viewBox="0 0 11 10"><path d="M0.8 0.8H10L5.4 9.2Z" fill="#d2d2d2"/></svg><div style="left:779px;top:319.2px;width:214px;height:1px;background:#262626;"></div><div style="left:779px;top:320.2px;width:214px;height:32.2px;background:#4a4a4a;"></div><div style="left:779px;top:352.4px;width:214px;height:1px;background:#2e2e2e;"></div><svg style="left:783px;top:332px;" width="14" height="10" viewBox="0 0 14 10"><path d="M1.2 5Q7 -1.2 12.8 5Q7 11.2 1.2 5Z" fill="none" stroke="#bdbdbd" stroke-width="1.3"/><path d="M4.6 4.4A2.4 2.4 0 0 1 9.4 4.4Q9.4 6.6 7 6.8Q4.6 6.6 4.6 4.4Z" fill="#bdbdbd"/></svg><svg style="left:802px;top:320px;" width="21" height="32" viewBox="0 0 21 32"><rect x="2" y="2" width="16" height="27" fill="#ffffff"/><rect x="5.8" y="2.5" width="3.3" height="3.3" fill="#d6d6d6"/><rect x="12.4" y="2.5" width="3.3" height="3.3" fill="#d6d6d6"/><rect x="2.5" y="5.8" width="3.3" height="3.3" fill="#d6d6d6"/><rect x="9.1" y="5.8" width="3.3" height="3.3" fill="#d6d6d6"/><rect x="15.7" y="5.8" width="3.3" height="3.3" fill="#d6d6d6"/><rect x="5.8" y="9.1" width="3.3" height="3.3" fill="#d6d6d6"/><rect x="12.4" y="9.1" width="3.3" height="3.3" fill="#d6d6d6"/><rect x="2.5" y="12.4" width="3.3" height="3.3" fill="#d6d6d6"/><rect x="9.1" y="12.4" width="3.3" height="3.3" fill="#d6d6d6"/><rect x="15.7" y="12.4" width="3.3" height="3.3" fill="#d6d6d6"/><rect x="5.8" y="15.7" width="3.3" height="3.3" fill="#d6d6d6"/><rect x="12.4" y="15.7" width="3.3" height="3.3" fill="#d6d6d6"/><rect x="2.5" y="19.0" width="3.3" height="3.3" fill="#d6d6d6"/><rect x="9.1" y="19.0" width="3.3" height="3.3" fill="#d6d6d6"/><rect x="15.7" y="19.0" width="3.3" height="3.3" fill="#d6d6d6"/><rect x="5.8" y="22.3" width="3.3" height="3.3" fill="#d6d6d6"/><rect x="12.4" y="22.3" width="3.3" height="3.3" fill="#d6d6d6"/><rect x="2.5" y="25.6" width="3.3" height="3.3" fill="#d6d6d6"/><rect x="9.1" y="25.6" width="3.3" height="3.3" fill="#d6d6d6"/><rect x="15.7" y="25.6" width="3.3" height="3.3" fill="#d6d6d6"/><rect x="2" y="2" width="16" height="27" fill="none" stroke="#111" stroke-width="1"/><rect x="1.2" y="1.2" width="17.6" height="28.6" fill="none" stroke="#e8e8e8" stroke-width="1.6" stroke-dasharray="3.2 2"/><rect x="6" y="12.8" width="8.8" height="6.4" fill="#141428"/><rect x="7" y="14.2" width="6.6" height="2.6" fill="#9a7ab8"/><rect x="9" y="15.2" width="3" height="1.8" fill="#e8a080"/></svg><span style="left:828.00px;top:331.67px;font-size:11.5px;line-height:11.5px;color:#d2d2d2;letter-spacing:0.148px;">Lớp 1</span><svg style="left:783px;top:366px;" width="14" height="10" viewBox="0 0 14 10"><path d="M1.2 5Q7 -1.2 12.8 5Q7 11.2 1.2 5Z" fill="none" stroke="#bdbdbd" stroke-width="1.3"/><path d="M4.6 4.4A2.4 2.4 0 0 1 9.4 4.4Q9.4 6.6 7 6.8Q4.6 6.6 4.6 4.4Z" fill="#bdbdbd"/></svg><div style="left:804px;top:356.5px;width:16px;height:27px;background:#ffffff;box-sizing:border-box;border:0.8px solid #111;"></div><span style="left:828.00px;top:365.47px;font-size:11.5px;line-height:11.5px;color:#d2d2d2;letter-spacing:-0.060px;">Background</span><svg style="left:979px;top:363px;" width="12" height="14" viewBox="0 0 12 14"><path d="M3 6V4.3Q3 1.2 6 1.2Q9 1.2 9 4.3V6" fill="none" stroke="#7a7a7a" stroke-width="1.5"/><rect x="1.2" y="6" width="9.6" height="7" rx="1" fill="#7a7a7a"/></svg><svg style="left:993px;top:322px;" width="7" height="5" viewBox="0 0 7 5"><path d="M0.5 4.5L3.5 0.8L6.5 4.5Z" fill="#1a1a1a"/></svg>
</body></html>
